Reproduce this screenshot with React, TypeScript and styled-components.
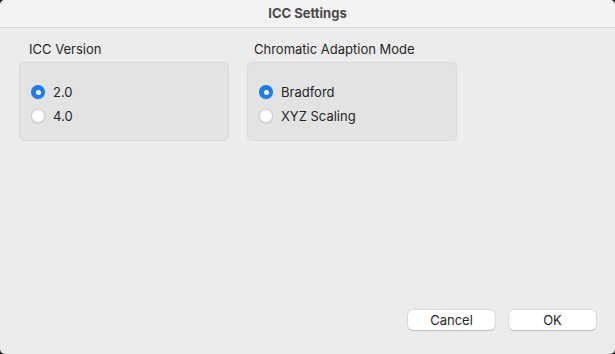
import styled, { createGlobalStyle } from "styled-components";

const GlobalStyle = createGlobalStyle`
  html, body {
    margin: 0;
    padding: 0;
    background: #1e1e1e;
  }
  body {
    font-family: Inter, "Liberation Sans", Arial, sans-serif;
    -webkit-font-smoothing: antialiased;
  }
`;

interface Option {
  label: string;
  checked?: boolean;
}

const versions: Option[] = [{ label: "2.0", checked: true }, { label: "4.0" }];
const modes: Option[] = [{ label: "Bradford", checked: true }, { label: "XYZ Scaling" }];

function RadioGroup({ title, options, indent }: { title: string; options: Option[]; indent: number }) {
  return (
    <Group>
      <GroupLabel $indent={indent}>{title}</GroupLabel>
      <GroupBox>
        {options.map((o) => (
          <RadioRow key={o.label}>
            <Radio $checked={!!o.checked} />
            <span>{o.label}</span>
          </RadioRow>
        ))}
      </GroupBox>
    </Group>
  );
}

function App() {
  return (
    <>
      <GlobalStyle />
      <Window>
        <TitleBar>ICC Settings</TitleBar>
        <Body>
          <Groups>
            <RadioGroup title="ICC Version" options={versions} indent={10} />
            <RadioGroup title="Chromatic Adaption Mode" options={modes} indent={7} />
          </Groups>
          <Footer>
            <Button>Cancel</Button>
            <Button>OK</Button>
          </Footer>
        </Body>
      </Window>
    </>
  );
}

const Window = styled.div`
  width: 615px;
  height: 354px;
  display: flex;
  flex-direction: column;
  background: #ececec;
  border-radius: 5px;
  overflow: hidden;
`;

const TitleBar = styled.div`
  height: 28px;
  flex-shrink: 0;
  display: flex;
  align-items: center;
  justify-content: center;
  background: #f3f3f3;
  border-bottom: 1px solid #d2d2d2;
  box-sizing: border-box;
  font-size: 13px;
  font-weight: 700;
  color: #4a4a4a;
  padding-bottom: 2px;
`;

const Body = styled.div`
  flex: 1;
  display: flex;
  flex-direction: column;
  justify-content: space-between;
  padding: 13px 19px 24px 19px;
`;

const Groups = styled.div`
  display: flex;
  gap: 18px;
`;

const Group = styled.div`
  width: 210px;
  display: flex;
  flex-direction: column;
`;

const GroupLabel = styled.div<{ $indent: number }>`
  font-size: 13px;
  color: #262626;
  padding-left: ${(p) => p.$indent}px;
  height: 16px;
  line-height: 16px;
  margin-bottom: 5px;
`;

const GroupBox = styled.div`
  height: 79px;
  box-sizing: border-box;
  background: #e3e3e3;
  border: 1px solid #d8d8d8;
  border-radius: 5px;
  padding: 21px 0 0 11px;
  display: flex;
  flex-direction: column;
  gap: 8px;
`;

const RadioRow = styled.div`
  display: flex;
  align-items: center;
  gap: 8px;
  height: 16px;
  font-size: 13px;
  color: #262626;
`;

const Radio = styled.span<{ $checked: boolean }>`
  width: 14px;
  height: 14px;
  box-sizing: border-box;
  border-radius: 50%;
  flex-shrink: 0;
  position: relative;
  background: ${(p) => (p.$checked ? "#1b7cf6" : "#ffffff")};
  border: ${(p) => (p.$checked ? "none" : "1px solid #cfcfcf")};
  box-shadow: 0 0.5px 1px rgba(0, 0, 0, 0.12);
  &::after {
    content: "";
    display: ${(p) => (p.$checked ? "block" : "none")};
    position: absolute;
    left: 4.5px;
    top: 4.5px;
    width: 5px;
    height: 5px;
    border-radius: 50%;
    background: #ffffff;
  }
`;

const Footer = styled.div`
  display: flex;
  justify-content: flex-end;
  gap: 14px;
`;

const Button = styled.button`
  width: 87px;
  height: 20px;
  padding: 0;
  background: #ffffff;
  border: none;
  border-radius: 5px;
  box-shadow: 0 0 0 0.5px rgba(0, 0, 0, 0.15), 0 1px 1px rgba(0, 0, 0, 0.12);
  font-family: inherit;
  font-size: 13px;
  color: #262626;
  line-height: 20px;
`;

export default App;
